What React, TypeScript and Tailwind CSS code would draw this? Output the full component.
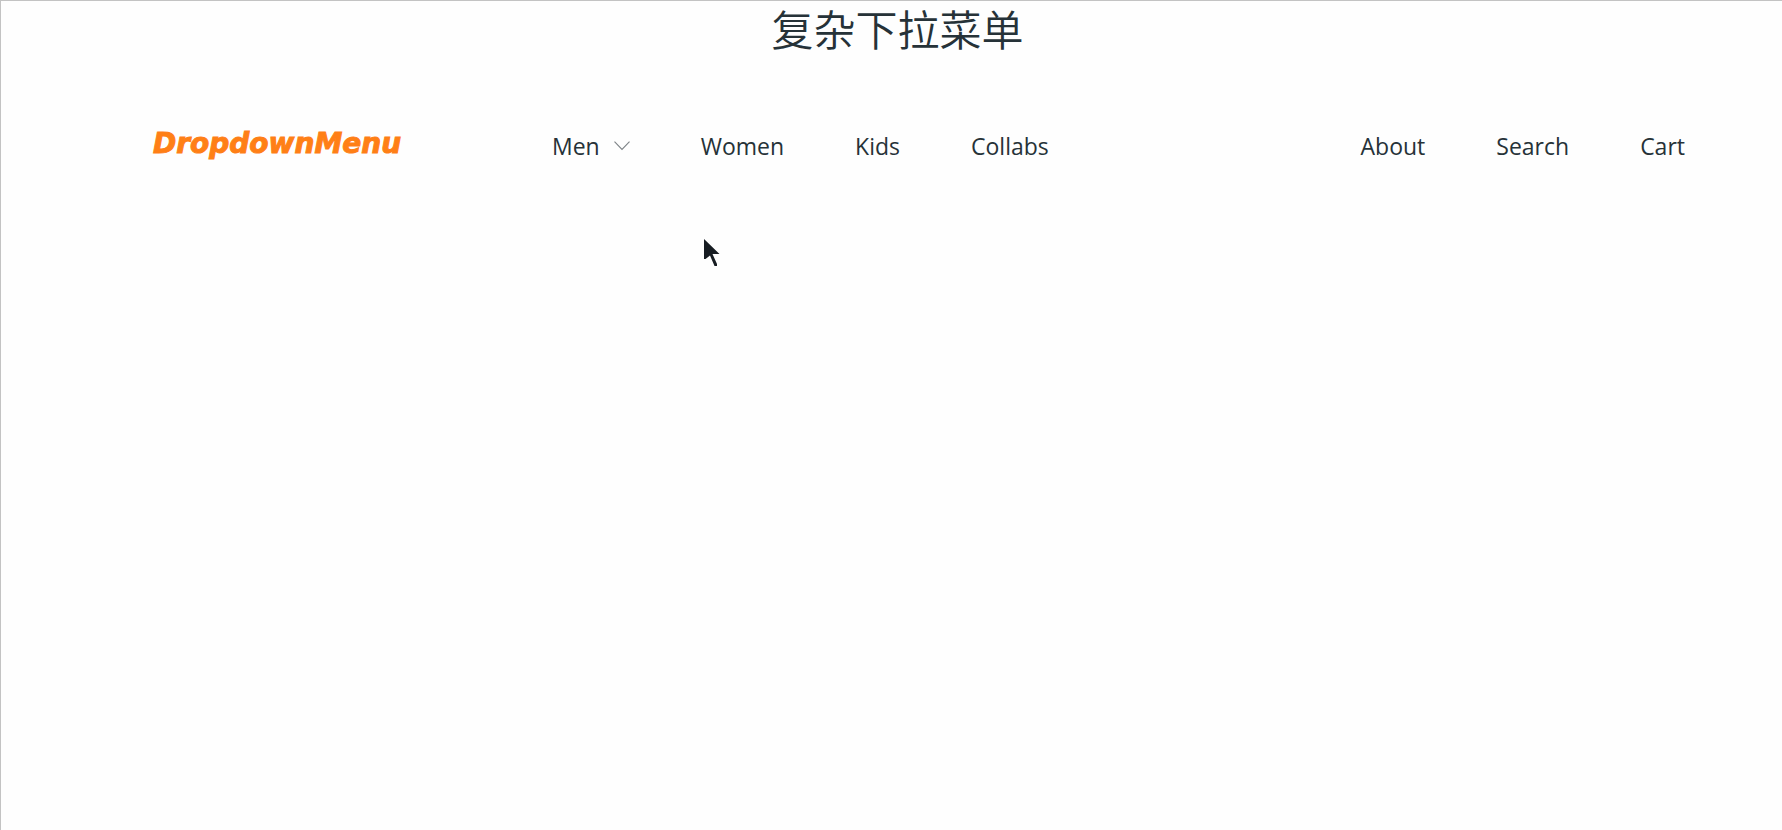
const primaryLinks = ["Women", "Kids", "Collabs"];
const secondaryLinks = ["About", "Search", "Cart"];

function ChevronDown() {
  return (
    <svg width="16" height="10" viewBox="0 0 16 10" fill="none" stroke="#7d8286" strokeWidth="1.1" aria-hidden="true">
      <path d="M0.5 0.7 8 8.4 15.5 0.7" />
    </svg>
  );
}

function Pointer() {
  return (
    <svg className="pointer-events-none absolute top-[238px] left-[703px]" width="16" height="28" viewBox="0 0 16 28" fill="#171c22" aria-hidden="true">
      <path d="M0 0 15.5 15H8.5L13 25 13 27H10.5L6 16.5 1.5 20H0Z" />
    </svg>
  );
}

function NavLink({ label }: { label: string }) {
  return (
    <a href="#" className="hover:text-[#ff7f16]">
      {label}
    </a>
  );
}

export default function App() {
  return (
    <div className="relative min-h-screen border-t border-l border-[#c3c3c3] bg-[#fefefe] font-['Open_Sans','Noto_Sans_CJK_SC',sans-serif] text-[#263238]">
      <h1 className="pl-3 text-center font-['Noto_Sans_CJK_SC',sans-serif] text-[42px] leading-[54px] font-[350]">复杂下拉菜单</h1>
      <header className="flex items-center pt-[69px] pr-[97px] pl-[152px]">
        <a href="#" className="mb-1 w-[399px] shrink-0 font-['DejaVu_Sans',sans-serif] text-[28px] leading-10 font-bold text-[#ff7f16] italic [-webkit-text-stroke:1px_#ff7f16]">
          DropdownMenu
        </a>
        <nav className="flex grow items-center justify-between text-[23px] leading-10">
          <div className="flex items-center gap-[71px]">
            <button type="button" className="flex items-center gap-3.5 hover:text-[#ff7f16]">
              Men
              <ChevronDown />
            </button>
            {primaryLinks.map((label) => (
              <NavLink key={label} label={label} />
            ))}
          </div>
          <div className="flex items-center gap-[71px]">
            {secondaryLinks.map((label) => (
              <NavLink key={label} label={label} />
            ))}
          </div>
        </nav>
      </header>
      <Pointer />
    </div>
  );
}
